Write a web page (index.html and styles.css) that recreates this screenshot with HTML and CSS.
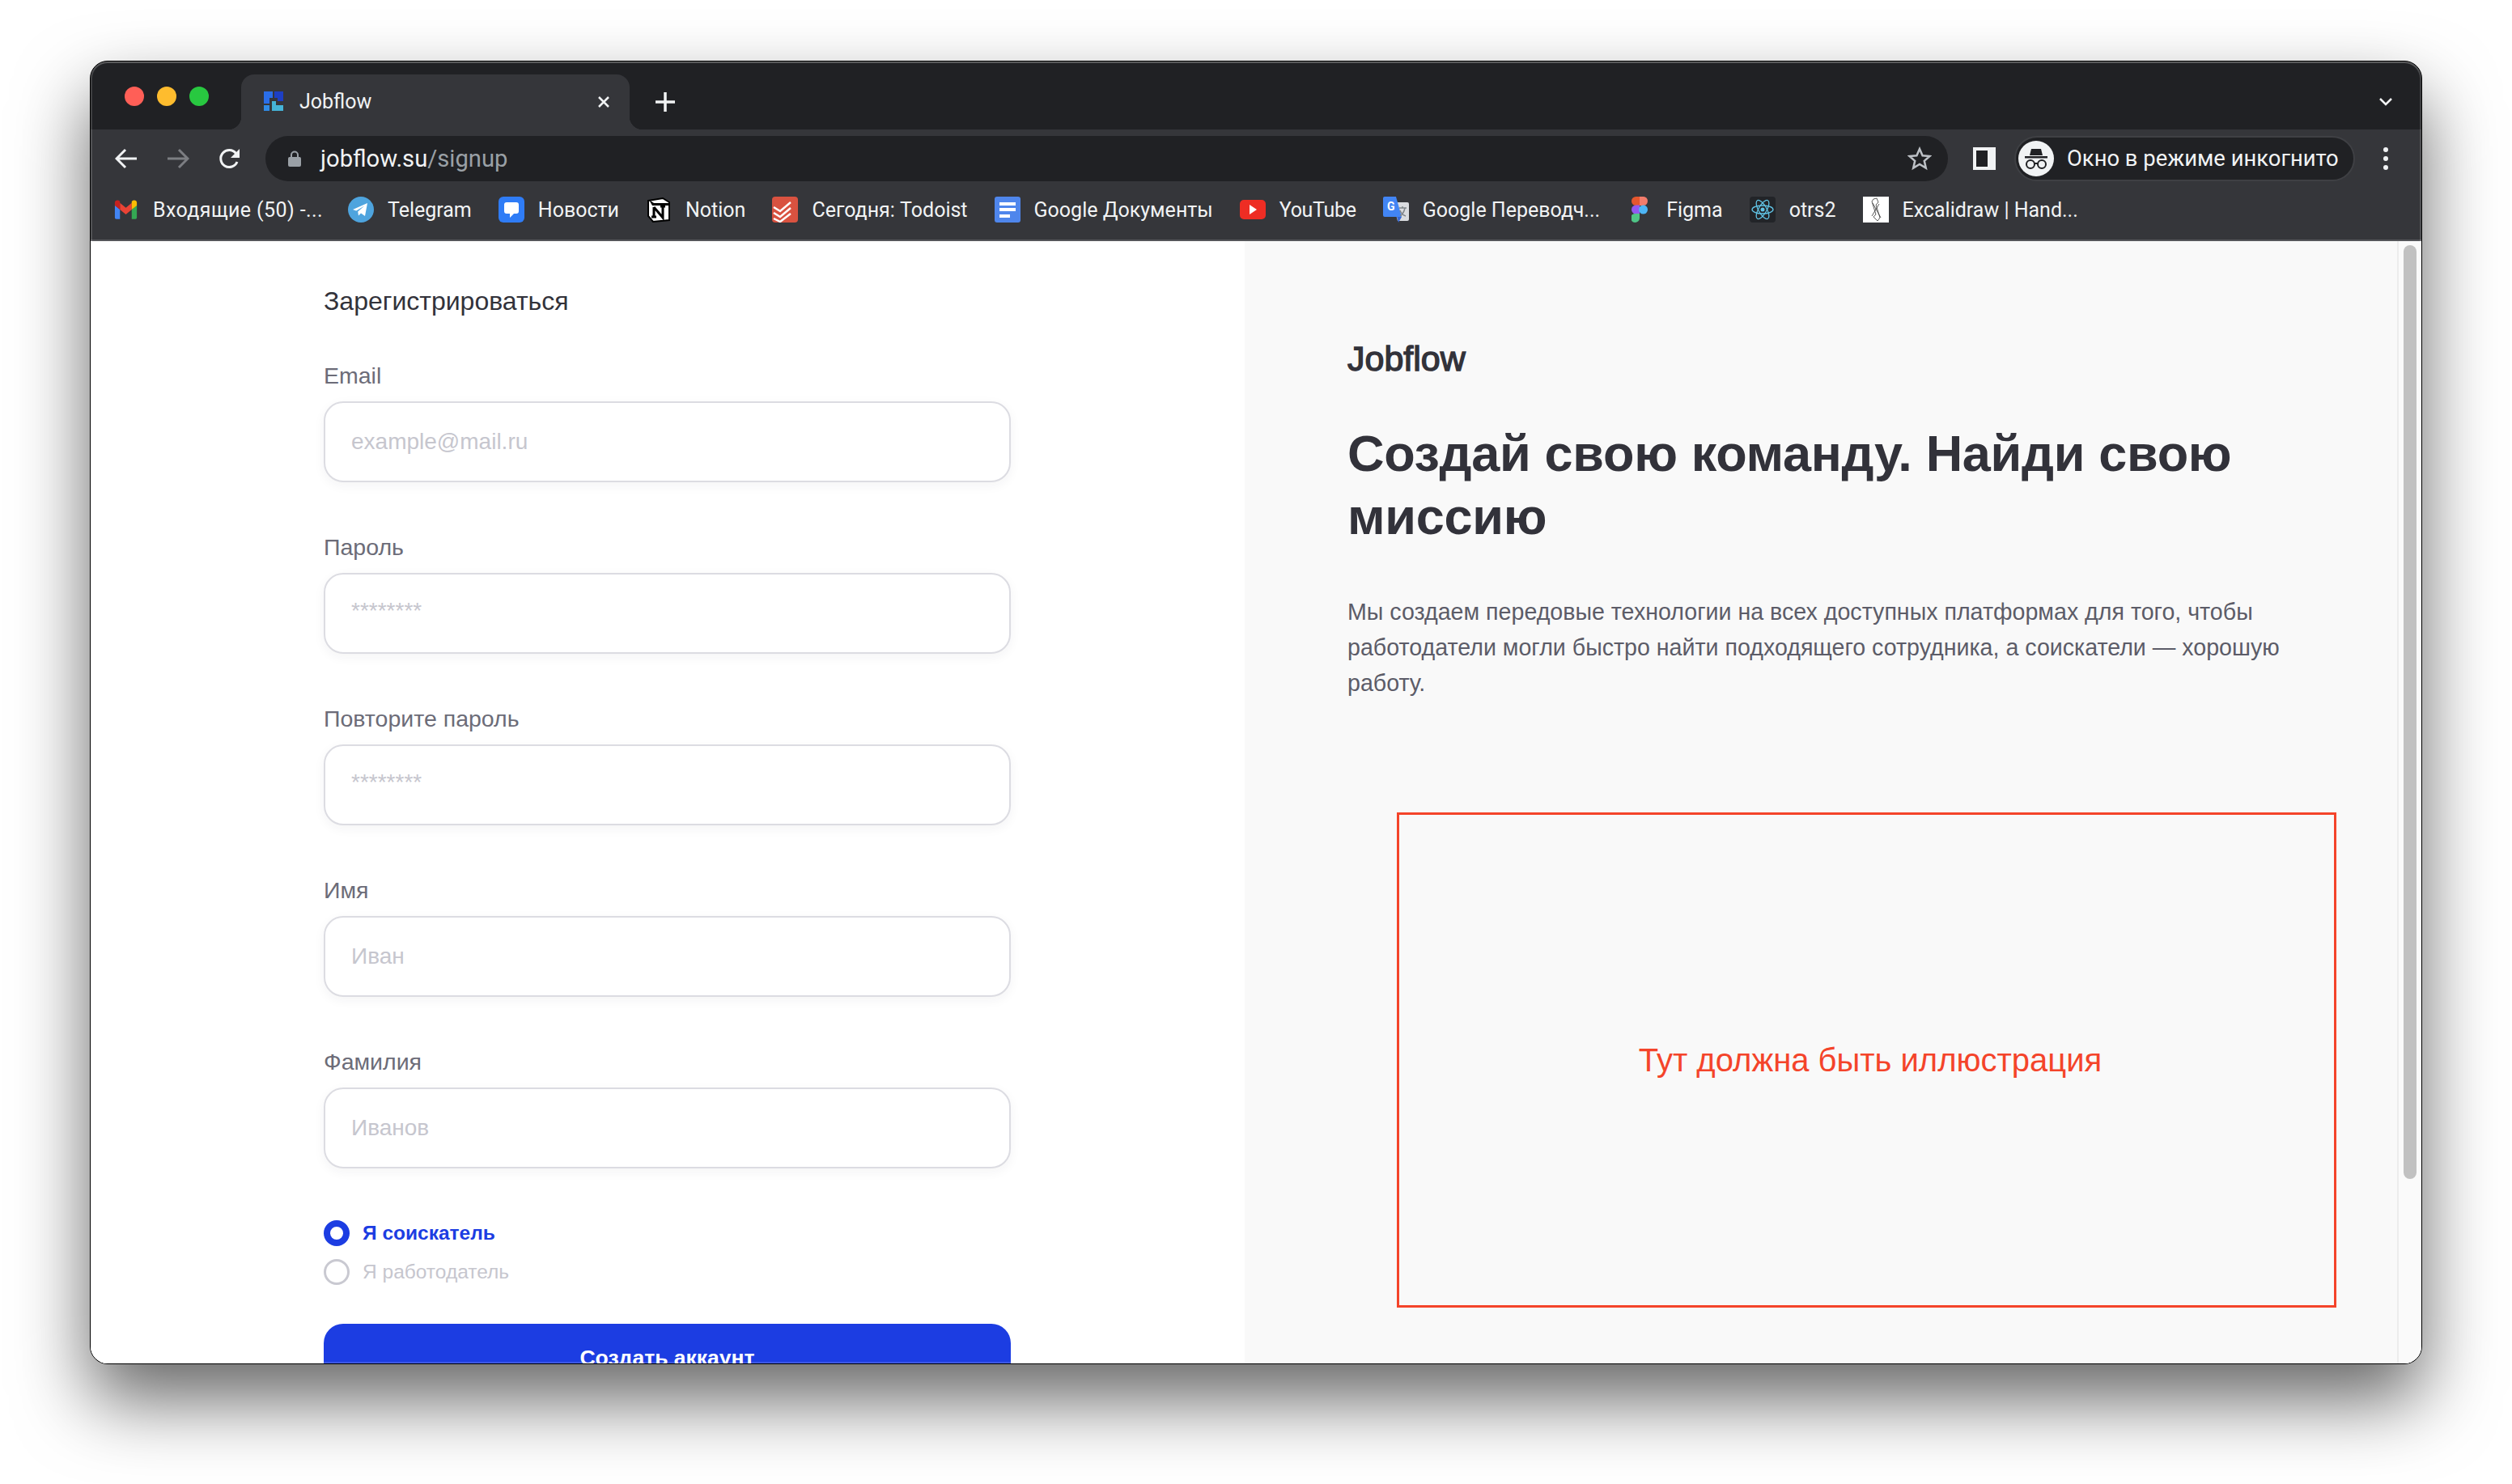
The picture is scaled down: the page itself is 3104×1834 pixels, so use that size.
FILE: index.html
```html
<!DOCTYPE html>
<html lang="ru">
<head>
    <meta charset="UTF-8">
    <title>Jobflow</title>
    <link rel="stylesheet" href="styles.css">
</head>
<body>
    <div class="window">
        <!-- tabs -->
        <div class="tabstrip">
            <div class="traffic">
                <span class="dot dot-red"></span>
                <span class="dot dot-yellow"></span>
                <span class="dot dot-green"></span>
            </div>
            <div class="tab">
                <svg class="tab-icon" viewBox="0 0 24 24">
                    <path fill="#2a6ee8" d="M0 0h11v8H7v7H0z"/>
                    <path fill="#1d3fc4" d="M13 0h11v12h-7V8h-4z"/>
                    <path fill="#2f8be6" d="M0 17h7v7H0z"/>
                    <path fill="#45b4d8" d="M10 12h5v5h9v7H10z"/>
                </svg>
                <span class="tab-title">Jobflow</span>
                <svg class="tab-close" viewBox="0 0 16 16"><path d="M2 2l12 12M14 2L2 14"/></svg>
            </div>
            <svg class="new-tab" viewBox="0 0 24 24"><path d="M12 0v24M0 12h24"/></svg>
            <svg class="tab-menu" viewBox="0 0 16 10"><path d="M1 1l7 7 7-7"/></svg>
        </div>

        <!-- address bar -->
        <div class="toolbar">
            <button class="nav-btn">
                <svg viewBox="0 0 28 26"><path d="M13 2L2 13l11 11M2 13h25"/></svg>
            </button>
            <button class="nav-btn nav-off">
                <svg viewBox="0 0 28 26"><path d="M15 2l11 11-11 11M26 13H1"/></svg>
            </button>
            <button class="nav-btn">
                <svg viewBox="0 0 28 28"><path d="M23 18a10.500 10.500 0 1 1-1.500-10.500"/><path class="fill" d="M26 2v11H15z"/></svg>
            </button>
            <div class="omnibox">
                <svg class="lock" viewBox="0 0 16 20"><path d="M4 8V5.500a4 4 0 0 1 8 0V8" fill="none" stroke="#9aa0a6" stroke-width="2"/><rect y="8" width="16" height="12" rx="2" fill="#9aa0a6"/></svg>
                <span class="url">jobflow.su<span class="url-path">/signup</span></span>
                <svg class="star" viewBox="0 0 30 30"><path d="M15 3l3.600 8.200 8.900.8-6.700 5.900 2 8.700-7.800-4.600-7.800 4.600 2-8.700L2.500 12l8.900-.8z"/></svg>
            </div>
            <div class="side-panel"><span class="side-panel-hole"></span></div>
            <div class="incognito">
                <svg class="incognito-icon" viewBox="0 0 44 44">
                    <circle cx="22" cy="22" r="22" fill="#f1f3f4"/>
                    <path fill="#202124" d="M14 18l2-8h12l2 8z"/>
                    <rect x="8" y="19" width="28" height="2.500" fill="#202124"/>
                    <circle cx="15" cy="29" r="5" fill="none" stroke="#202124" stroke-width="2"/>
                    <circle cx="29" cy="29" r="5" fill="none" stroke="#202124" stroke-width="2"/>
                    <path d="M20 28h4" stroke="#202124" stroke-width="2"/>
                </svg>
                <span>Окно в режиме инкогнито</span>
            </div>
            <div class="kebab"><i></i><i></i><i></i></div>
        </div>

        <!-- bookmarks -->
        <div class="bookmarks">
            <div class="bookmark bookmark-mail">
                <svg class="bm-gmail" viewBox="0 0 32 26">
                    <path fill="#4285f4" d="M1 7v17a2 2 0 0 0 2 2h5V13z"/>
                    <path fill="#34a853" d="M31 7v17a2 2 0 0 1-2 2h-5V13z"/>
                    <path fill="#ea4335" d="M8 4l8 6.500L24 4v9l-8 6.500L8 13z"/>
                    <path fill="#c5221f" d="M1 3.500C1 .500 5 -1 8 2v11L1 7.500z"/>
                    <path fill="#fbbc04" d="M31 3.500c0-3-4-4.500-7-1.500v11l7-5.500z"/>
                </svg>
                Входящие (50) -...
            </div>
            <div class="bookmark">
                <svg class="bm-icon" viewBox="0 0 32 32">
                    <circle cx="16" cy="16" r="16" fill="#4ea4de"/>
                    <path fill="#fff" d="M6 16l18-8-3 16-5-3.500-3 3-.8-5 8-7-10 6z"/>
                </svg>
                Telegram
            </div>
            <div class="bookmark">
                <svg class="bm-icon" viewBox="0 0 32 32">
                    <rect width="32" height="32" rx="6" fill="#2f7cf6"/>
                    <path fill="#fff" d="M10 7h12a3 3 0 0 1 3 3v8a3 3 0 0 1-3 3h-3l-5 5v-5h-4a3 3 0 0 1-3-3v-8a3 3 0 0 1 3-3z"/>
                </svg>
                Новости
            </div>
            <div class="bookmark">
                <svg class="bm-icon" viewBox="0 0 32 32">
                    <path fill="#fff" stroke="#000" stroke-width="2" d="M3 5l18-3 8 5v22l-20 2-6-7z"/>
                    <path fill="#000" d="M4 4l6 4h19v3H8z"/>
                    <path fill="none" stroke="#000" stroke-width="3" d="M10 13v12M10 13l11 13V12M7 25h6M18 12h6"/>
                </svg>
                Notion
            </div>
            <div class="bookmark">
                <svg class="bm-icon" viewBox="0 0 32 32">
                    <rect width="32" height="32" rx="4" fill="#d95240"/>
                    <path fill="none" stroke="#fff" stroke-width="2.500" d="M2 13l8 5L23 7M2 20l8 5L23 14M2 27l8 4 13-10"/>
                </svg>
                Сегодня: Todoist
            </div>
            <div class="bookmark">
                <svg class="bm-icon" viewBox="0 0 32 32">
                    <rect width="32" height="32" rx="3" fill="#4f86ec"/>
                    <path fill="#fff" d="M6 7h20v4H6zM6 14h20v4H6zM6 22h13v4H6z"/>
                </svg>
                Google Документы
            </div>
            <div class="bookmark bookmark-yt">
                <svg class="bm-icon" viewBox="0 0 32 24">
                    <rect width="32" height="24" rx="5" fill="#ee2d24"/>
                    <path fill="#fff" d="M12 6l9 6-9 6z"/>
                </svg>
                YouTube
            </div>
            <div class="bookmark">
                <svg class="bm-icon" viewBox="0 0 32 32">
                    <path fill="#dadce0" d="M12 7h18a2 2 0 0 1 2 2v19a2 2 0 0 1-2 2H18z"/>
                    <path fill="#4285f4" d="M2 0h14l7 25H2a2 2 0 0 1-2-2V2a2 2 0 0 1 2-2z"/>
                    <path fill="#3367d6" d="M17 25h6l-4 7z"/>
                    <text class="gt-g" x="5" y="17">G</text>
                    <path fill="none" stroke="#80868b" stroke-width="1.500" d="M20 14h9M24 12v2M27 14c-1 5-3 8-6 10M21 17c1 3 4 6 7 7"/>
                </svg>
                Google Переводч...
            </div>
            <div class="bookmark bookmark-figma">
                <svg class="bm-figma" viewBox="0 0 20 32">
                    <path fill="#e4572e" d="M10 0H5.500a5.500 5.500 0 0 0 0 11H10z"/>
                    <path fill="#f27c6b" d="M10 0h4.500a5.500 5.500 0 0 1 0 11H10z"/>
                    <path fill="#9158f0" d="M10 10.500H5.500a5.500 5.500 0 0 0 0 11H10z"/>
                    <circle cx="14.500" cy="16" r="5.500" fill="#4db5f5"/>
                    <path fill="#4fc587" d="M10 21H5.500a5.500 5.500 0 1 0 4.500 5.500z"/>
                </svg>
                Figma
            </div>
            <div class="bookmark">
                <svg class="bm-icon" viewBox="0 0 32 32">
                    <rect width="32" height="32" rx="4" fill="#222428"/>
                    <g fill="none" stroke="#61c4e6" stroke-width="1.300">
                        <ellipse cx="16" cy="16" rx="13" ry="5"/>
                        <ellipse cx="16" cy="16" rx="13" ry="5" transform="rotate(60 16 16)"/>
                        <ellipse cx="16" cy="16" rx="13" ry="5" transform="rotate(120 16 16)"/>
                    </g>
                    <circle cx="16" cy="16" r="2.500" fill="#61c4e6"/>
                </svg>
                otrs2
            </div>
            <div class="bookmark">
                <svg class="bm-icon" viewBox="0 0 32 32">
                    <rect width="32" height="32" fill="#fff"/>
                    <path fill="none" stroke="#333" stroke-width=".8" d="M13 3l4-1 2 5-3 3 5 16-3 4-5-5 3-3-5-16zM12 8l10 18M20 9L11 24"/>
                </svg>
                Excalidraw | Hand...
            </div>
        </div>

        <!-- page -->
        <div class="page">
            <section class="signup">
                <h2 class="signup-title">Зарегистрироваться</h2>
                <form class="signup-form">
                    <div class="field">
                        <label class="field-label">Email</label>
                        <input class="field-input" type="text" placeholder="example@mail.ru">
                    </div>
                    <div class="field">
                        <label class="field-label">Пароль</label>
                        <input class="field-input field-password" type="text" placeholder="********">
                    </div>
                    <div class="field">
                        <label class="field-label">Повторите пароль</label>
                        <input class="field-input field-password" type="text" placeholder="********">
                    </div>
                    <div class="field">
                        <label class="field-label">Имя</label>
                        <input class="field-input" type="text" placeholder="Иван">
                    </div>
                    <div class="field">
                        <label class="field-label">Фамилия</label>
                        <input class="field-input" type="text" placeholder="Иванов">
                    </div>
                    <div class="roles">
                        <label class="role role-active">
                            <input class="role-radio" type="radio" name="role" checked>
                            Я соискатель
                        </label>
                        <label class="role">
                            <input class="role-radio" type="radio" name="role">
                            Я работодатель
                        </label>
                    </div>
                    <button class="submit" type="button">Создать аккаунт</button>
                </form>
            </section>
            <section class="promo">
                <div class="brand">Jobflow</div>
                <h1 class="promo-title">Создай свою команду. Найди свою миссию</h1>
                <p class="promo-text">Мы создаем передовые технологии на всех доступных платформах для того, чтобы работодатели могли быстро найти подходящего сотрудника, а соискатели — хорошую работу.</p>
                <div class="illustration">Тут должна быть иллюстрация</div>
            </section>
            <div class="scrollbar"><div class="scrollbar-thumb"></div></div>
        </div>
    </div>
</body>
</html>
```

FILE: styles.css
```css
* {
    box-sizing: border-box;
}

body {
    margin: 0;
    width: 3104px;
    height: 1834px;
    padding: 75px 0 0 111px;
    background: #fff;
    overflow: hidden;
    font-family: "Liberation Sans", Arial, sans-serif;
}

.window {
    width: 2882px;
    height: 1611px;
    border: 1px solid #000;
    border-radius: 22px;
    overflow: hidden;
    display: flex;
    flex-direction: column;
    background: #35363a;
    box-shadow: 0 44px 90px rgba(0, 0, 0, .6);
    position: relative;
}

/* thin light edge inside the window frame */
.window::after {
    content: '';
    position: absolute;
    inset: 0;
    border-radius: 21px;
    box-shadow: inset 0 0 0 2px rgba(255, 255, 255, .14), inset 0 2px 0 rgba(255, 255, 255, .14);
    pointer-events: none;
}

/* tabs */
.tabstrip {
    height: 84px;
    padding-top: 16px;
    background: #202124;
    display: flex;
    align-items: flex-start;
    flex-shrink: 0;
}

.traffic {
    width: 186px;
    height: 54px;
    padding: 15px 0 0 42px;
    display: flex;
    gap: 16px;
    flex-shrink: 0;
}

.dot {
    width: 24px;
    height: 24px;
    border-radius: 50%;
}

.dot-red { background: #ff5f57; }
.dot-yellow { background: #febc2e; }
.dot-green { background: #28c840; }

.tab {
    width: 480px;
    height: 68px;
    background: #35363a;
    border-radius: 16px 16px 0 0;
    padding: 0 24px 0 28px;
    display: flex;
    align-items: center;
    color: #f1f3f4;
    font: 25px Roboto, sans-serif;
    position: relative;
}

.tab::before,
.tab::after {
    content: '';
    position: absolute;
    bottom: 0;
    width: 16px;
    height: 16px;
}

.tab::before {
    left: -16px;
    background: radial-gradient(circle at 0 0, #202124 16px, #35363a 16.500px);
}

.tab::after {
    right: -16px;
    background: radial-gradient(circle at 100% 0, #202124 16px, #35363a 16.500px);
}

.tab-icon {
    width: 24px;
    height: 24px;
    margin: -2px 20px 0 0;
}

.tab-title {
    flex: 1;
    margin-top: -1px;
}

.tab-close {
    width: 16px;
    height: 16px;
    fill: none;
    stroke: #f1f3f4;
    stroke-width: 2.500;
}

.new-tab {
    width: 24px;
    height: 24px;
    margin: 22px 0 0 32px;
    fill: none;
    stroke: #f1f3f4;
    stroke-width: 3.500;
}

.tab-menu {
    width: 16px;
    height: 10px;
    margin: 29px 36px 0 auto;
    fill: none;
    stroke: #f1f3f4;
    stroke-width: 2.500;
}

/* address bar */
.toolbar {
    height: 64px;
    padding: 8px 0 0 12px;
    display: flex;
    align-items: flex-start;
    flex-shrink: 0;
}

.nav-btn {
    width: 64px;
    height: 56px;
    padding: 0;
    border: 0;
    background: none;
    display: flex;
    align-items: center;
    justify-content: center;
}

.nav-btn svg {
    width: 28px;
    height: 28px;
    fill: none;
    stroke: #f1f3f4;
    stroke-width: 3;
}

.nav-btn svg .fill {
    fill: #f1f3f4;
    stroke: none;
}

.nav-off svg {
    stroke: #7c7e82;
}

.omnibox {
    width: 2079px;
    height: 56px;
    margin-left: 12px;
    padding: 0 20px 0 28px;
    border-radius: 28px;
    background: #202124;
    display: flex;
    align-items: center;
    color: #f1f3f4;
    font: 29.200px Roboto, sans-serif;
}

.lock {
    width: 16px;
    height: 20px;
    margin-right: 24px;
}

.url {
    flex: 1;
}

.url-path {
    color: #9aa0a6;
}

.star {
    width: 30px;
    height: 30px;
    fill: none;
    stroke: #bdc1c6;
    stroke-width: 2.500;
}

.side-panel {
    width: 28px;
    height: 28px;
    margin: 14px 0 0 31px;
    padding: 4px 10px 4px 4px;
    background: #f1f3f4;
}

.side-panel-hole {
    display: block;
    height: 100%;
    background: #202124;
}

.incognito {
    width: 421px;
    height: 56px;
    margin-left: 23px;
    padding: 0 0 0 3px;
    border: 2px solid #3f4044;
    border-radius: 28px;
    background: #202124;
    display: flex;
    align-items: center;
    gap: 16px;
    color: #f1f3f4;
    font: 27.400px Roboto, sans-serif;
    white-space: nowrap;
    flex-shrink: 0;
}

.incognito-icon {
    width: 44px;
    height: 44px;
}

.kebab {
    width: 76px;
    height: 56px;
    display: flex;
    flex-direction: column;
    align-items: center;
    justify-content: center;
    gap: 5px;
}

.kebab i {
    width: 6px;
    height: 6px;
    border-radius: 50%;
    background: #f1f3f4;
}

/* bookmarks */
.bookmarks {
    height: 74px;
    padding: 0 0 2px 29px;
    border-bottom: 2px solid #55565a;
    display: flex;
    align-items: center;
    gap: 33px;
    color: #f1f3f4;
    font: 25px Roboto, sans-serif;
    white-space: nowrap;
    flex-shrink: 0;
}

.bookmark {
    display: flex;
    align-items: center;
    gap: 17px;
    height: 32px;
}

.bookmark-mail {
    gap: 19px;
    letter-spacing: .4px;
    margin-right: -2px;
}

.bookmark-yt {
    letter-spacing: -.3px;
}

.bookmark-figma {
    margin-left: 2px;
}

.bm-icon {
    width: 32px;
    height: 32px;
    flex-shrink: 0;
}

.bm-gmail {
    width: 29px;
    height: 24px;
    flex-shrink: 0;
}

.bm-figma {
    width: 20px;
    height: 32px;
    margin: 0 6px 0 4px;
    flex-shrink: 0;
}

.gt-g {
    fill: #fff;
    font: bold 14px Roboto, sans-serif;
}

/* page */
.page {
    flex: 1;
    min-height: 0;
    display: flex;
    overflow: hidden;
    background: #fff;
}

.signup {
    width: 1426px;
    padding: 56px 0 0 288px;
    background: #fff;
    flex-shrink: 0;
}

.signup-title {
    margin: 0;
    font-size: 32px;
    line-height: 36px;
    font-weight: 400;
    color: #32323a;
}

.signup-form {
    width: 849px;
    margin-top: 58px;
}

.field {
    margin-bottom: 64px;
}

.field-label {
    display: block;
    height: 32px;
    margin-bottom: 16px;
    font-size: 28.500px;
    line-height: 32px;
    color: #6c6c78;
}

.field-input {
    display: block;
    width: 100%;
    height: 100px;
    padding: 0 32px;
    border: 2px solid #dcdce2;
    border-radius: 24px;
    background: #fff;
    box-shadow: 0 4px 14px rgba(30, 30, 60, .05);
    font: 28px "Liberation Sans", Arial, sans-serif;
    outline: none;
}

.field-input::placeholder {
    color: #c6c6ce;
    opacity: 1;
}

.field-password {
    padding-bottom: 6px;
}

.roles {
    display: flex;
    flex-direction: column;
    gap: 16px;
}

.role {
    display: flex;
    align-items: center;
    gap: 16px;
    height: 32px;
    font-size: 24.500px;
    color: #c6c6ce;
}

.role-active {
    font-weight: 700;
    color: #1c3de2;
}

.role-radio {
    appearance: none;
    width: 32px;
    height: 32px;
    margin: 0;
    border: 3px solid #c9c9d1;
    border-radius: 50%;
    background: #fff;
}

.role-radio:checked {
    border: 8px solid #1c3de2;
}

.submit {
    display: block;
    width: 100%;
    height: 100px;
    margin-top: 48px;
    padding: 0 0 16px;
    border: 0;
    border-radius: 24px;
    background: #1c3de2;
    color: #fff;
    font: 700 26.500px "Liberation Sans", Arial, sans-serif;
}

.promo {
    flex: 1;
    padding: 123px 0 0 127px;
    background: #f9f9f9;
}

.brand {
    height: 44px;
    font-size: 43px;
    line-height: 44px;
    -webkit-text-stroke: 1.400px #32323a;
    color: #32323a;
}

.promo-title {
    width: 1180px;
    margin: 56px 0 0;
    font-size: 63px;
    line-height: 78px;
    font-weight: 700;
    letter-spacing: -.3px;
    color: #32323a;
}

.promo-text {
    width: 1180px;
    margin: 57px 0 0;
    font-size: 28.600px;
    line-height: 44px;
    color: #5c5c68;
}

.illustration {
    width: 1161px;
    height: 612px;
    margin: 138px 0 0 61px;
    padding-left: 9px;
    border: 3px solid #f4442a;
    display: flex;
    align-items: center;
    justify-content: center;
    color: #f4442a;
    font-size: 40px;
}

.scrollbar {
    width: 30px;
    padding: 5px 6px 0 6px;
    border-left: 2px solid #ececec;
    background: #fafafa;
    flex-shrink: 0;
}

.scrollbar-thumb {
    width: 16px;
    height: 1154px;
    border-radius: 8px;
    background: #c1c1c1;
}
```
